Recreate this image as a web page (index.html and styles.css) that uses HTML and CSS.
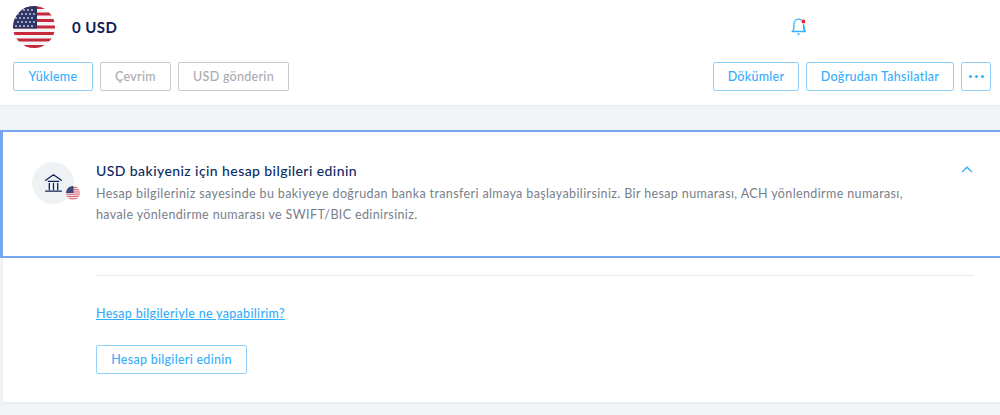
FILE: index.html
```html
<!DOCTYPE html>
<html lang="tr">
<head>
<meta charset="utf-8">
<title>USD</title>
<link rel="stylesheet" href="styles.css">
</head>
<body>
<header class="top">
  <div class="balance-row">
    <div class="balance">
      <svg class="flag-big" viewBox="0 0 42 42" aria-hidden="true">
        <defs><clipPath id="c1"><circle cx="21" cy="21" r="21"/></clipPath></defs>
        <g clip-path="url(#c1)">
          <rect width="42" height="42" fill="#f4f4f6"/>
          <g fill="#c8283c">
            <rect y="0" width="42" height="3"/><rect y="6.500" width="42" height="3"/><rect y="13" width="42" height="3"/><rect y="19.500" width="42" height="3"/><rect y="26" width="42" height="3"/><rect y="32.500" width="42" height="3"/><rect y="39" width="42" height="3"/>
          </g>
          <rect width="24" height="22.500" fill="#2c3563"/>
          <g fill="#d5d9ea">
            <circle cx="7" cy="4" r=".9"/><circle cx="11" cy="4" r=".9"/><circle cx="15" cy="4" r=".9"/><circle cx="19" cy="4" r=".9"/>
            <circle cx="5" cy="8" r=".9"/><circle cx="9" cy="8" r=".9"/><circle cx="13" cy="8" r=".9"/><circle cx="17" cy="8" r=".9"/><circle cx="21" cy="8" r=".9"/>
            <circle cx="3" cy="12" r=".9"/><circle cx="7" cy="12" r=".9"/><circle cx="11" cy="12" r=".9"/><circle cx="15" cy="12" r=".9"/><circle cx="19" cy="12" r=".9"/>
            <circle cx="5" cy="16" r=".9"/><circle cx="9" cy="16" r=".9"/><circle cx="13" cy="16" r=".9"/><circle cx="17" cy="16" r=".9"/><circle cx="21" cy="16" r=".9"/>
            <circle cx="3" cy="20" r=".9"/><circle cx="7" cy="20" r=".9"/><circle cx="11" cy="20" r=".9"/><circle cx="15" cy="20" r=".9"/><circle cx="19" cy="20" r=".9"/>
          </g>
        </g>
      </svg>
      <span class="amount">0 USD</span>
    </div>
    <svg class="bell" viewBox="0 0 16 19" aria-hidden="true">
      <path d="M1.200 13.500c1.300-1 1.700-2.300 1.700-4V6.500C2.900 3.500 4.900 1.200 7.700 1.200c.9 0 1.700.2 2.400.7M12.500 6.500v3c0 1.700.4 3 1.700 4ZM1.200 13.500h13" fill="none" stroke="#36aefc" stroke-width="1.300" stroke-linejoin="round" stroke-linecap="round"/>
      <path d="M5.800 15.600h3.400l-1.700 2Z" fill="#36aefc"/>
      <circle cx="12.400" cy="3.500" r="1.900" fill="#e8202f"/>
    </svg>
    <span class="bell-spacer"></span>
  </div>
  <div class="actions">
    <div class="group">
      <button class="btn btn-yukleme">Yükleme</button>
      <button class="btn off btn-cevrim">Çevrim</button>
      <button class="btn off btn-gonder">USD gönderin</button>
    </div>
    <div class="group">
      <button class="btn btn-dokum">Dökümler</button>
      <button class="btn btn-tahsil">Doğrudan Tahsilatlar</button>
      <button class="btn btn-more" aria-label="Daha fazla"><span></span><span></span><span></span></button>
    </div>
  </div>
</header>

<main class="panel">
  <section class="card">
    <div class="icon-wrap">
      <svg class="bank" viewBox="0 0 17 18" aria-hidden="true">
        <path d="M.7 6.300 8.500.8l7.800 5.500M3.300 7.400h10.400M4.300 9.500v6M8.500 9.500v6M12.700 9.500v6M.7 17.200h15.600" fill="none" stroke="#0c2158" stroke-width="1.300" stroke-linecap="round" stroke-linejoin="round"/>
      </svg>
      <svg class="flag-small" viewBox="0 0 15 15" aria-hidden="true">
        <defs><clipPath id="c2"><circle cx="7.500" cy="7.500" r="7.500"/></clipPath></defs>
        <g clip-path="url(#c2)">
          <rect width="15" height="15" fill="#f6e6ea"/>
          <g fill="#dc6a7c">
            <rect y="1" width="15" height="1.200"/><rect y="3.400" width="15" height="1.200"/><rect y="5.800" width="15" height="1.200"/><rect y="8.200" width="15" height="1.200"/><rect y="10.600" width="15" height="1.200"/><rect y="13" width="15" height="1.200"/>
          </g>
          <rect width="8" height="7.500" fill="#3a4a78"/>
        </g>
      </svg>
    </div>
    <div class="card-text">
      <h2>USD bakiyeniz için hesap bilgileri edinin</h2>
      <p>Hesap bilgileriniz sayesinde bu bakiyeye doğrudan banka transferi almaya başlayabilirsiniz. Bir hesap numarası, ACH yönlendirme numarası, havale yönlendirme numarası ve SWIFT/BIC edinirsiniz.</p>
    </div>
    <svg class="chev" viewBox="0 0 12 7" aria-hidden="true"><path d="M1 6 6 1.200 11 6" fill="none" stroke="#36aefc" stroke-width="1.300"/></svg>
  </section>
  <section class="details">
    <a class="link" href="#">Hesap bilgileriyle ne yapabilirim?</a>
    <button class="btn btn-get">Hesap bilgileri edinin</button>
  </section>
</main>
</body>
</html>
```
FILE: styles.css
```css
* { box-sizing: border-box; }
html, body { margin: 0; padding: 0; }
body {
  width: 1000px;
  height: 415px;
  overflow: hidden;
  background: #f1f4f7;
  font-family: Lato, "Open Sans", sans-serif;
  color: #0c2158;
}
.top {
  height: 106px;
  background: #fff;
  border-bottom: 1px solid #e6eaee;
  padding: 6px 9px 0 13px;
}
.balance-row {
  display: flex;
  align-items: center;
  height: 42px;
}
.balance {
  display: flex;
  align-items: center;
  gap: 17px;
  flex: 1;
}
.flag-big { width: 42px; height: 42px; display: block; }
.amount { font-size: 15px; font-weight: 700; letter-spacing: .45px; margin-top: -1px; }
.bell { width: 16px; height: 19px; display: block; margin-top: 1px; }
.bell-spacer { width: 184px; }
.actions {
  display: flex;
  justify-content: space-between;
  margin-top: 14px;
}
.group { display: flex; gap: 7px; }
.btn {
  height: 29px;
  padding: 0;
  background: #fff;
  border: 1px solid #8fd2fd;
  border-radius: 2px;
  color: #36aefc;
  font-family: inherit;
  font-size: 12.500px;
  font-weight: 500;
  letter-spacing: .28px;
}
.off { border-color: #c8c9cb; color: #a9abae; }
.btn-yukleme { width: 80px; }
.btn-cevrim { width: 71px; }
.btn-gonder { width: 111px; }
.btn-dokum { width: 86px; }
.btn-tahsil { width: 148px; }
.btn-more {
  width: 30px;
  display: flex;
  align-items: center;
  justify-content: center;
  gap: 3px;
}
.btn-more span { width: 3px; height: 3px; border-radius: 50%; background: #36aefc; }
.panel {
  margin: 24px 0 0 3px;
  height: 272px;
  background: #fff;
  box-shadow: 0 1px 3px rgba(12, 33, 88, .06);
}
.card {
  display: flex;
  align-items: flex-start;
  height: 128px;
  margin-left: -3px;
  border-style: solid;
  border-color: #76a7f0;
  border-width: 2px 0 2px 3px;
  background: #fff;
  padding: 30px 27px 0 29px;
}
.icon-wrap {
  position: relative;
  flex: none;
  width: 42px;
  height: 42px;
  border-radius: 50%;
  background: #eff2f5;
  display: flex;
  align-items: center;
  justify-content: center;
}
.bank { width: 17px; height: 18px; display: block; margin-bottom: 1px; }
.flag-small { position: absolute; right: -6px; bottom: 4px; width: 14px; height: 14px; }
.card-text { flex: 1; margin: 0 22px 0 22px; }
h2 {
  margin: -1px 0 0;
  font-size: 14px;
  line-height: 20px;
  font-weight: 500;
  letter-spacing: .42px;
  color: #0c2a64;
}
p {
  margin: 2px 0 0;
  font-size: 12.500px;
  line-height: 21px;
  letter-spacing: .375px;
  color: #77808a;
}
.chev { flex: none; width: 12px; height: 7px; margin-top: 4px; }
.details {
  margin: 17px 26px 0 93px;
  padding-top: 29px;
  border-top: 1px solid #e8eaed;
  display: flex;
  flex-direction: column;
  align-items: flex-start;
}
.link {
  font-size: 12.500px;
  line-height: 18px;
  letter-spacing: .3px;
  font-weight: 500;
  color: #36aefc;
  text-decoration: underline;
}
.btn-get { width: 151px; margin-top: 22px; }
```
